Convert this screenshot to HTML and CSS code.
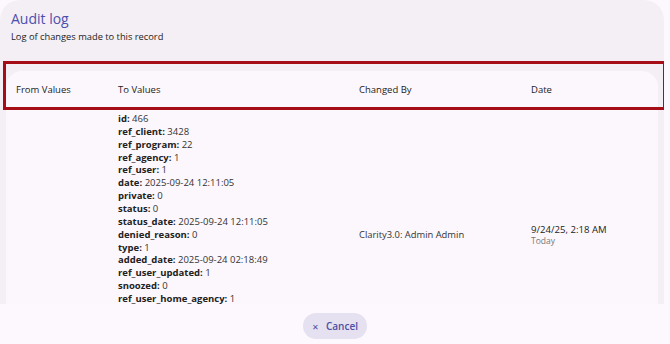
FILE: index.html
```html
<!DOCTYPE html>
<html>
<head>
<meta charset="utf-8">
<link rel="stylesheet" href="styles.css">
</head>
<body>
<div class="page">
  <div class="panel">
    <div class="head">
      <h1 class="title">Audit log</h1>
      <p class="subtitle">Log of changes made to this record</p>
    </div>
    <div class="card">
      <div class="row header-row">
        <div class="cell">From Values</div>
        <div class="cell">To Values</div>
        <div class="cell">Changed By</div>
        <div class="cell">Date</div>
      </div>
      <div class="row body-row">
        <div class="cell"></div>
        <div class="cell values">
          <div><b>id:</b> 466</div>
          <div><b>ref_client:</b> 3428</div>
          <div><b>ref_program:</b> 22</div>
          <div><b>ref_agency:</b> 1</div>
          <div><b>ref_user:</b> 1</div>
          <div><b>date:</b> 2025-09-24 12:11:05</div>
          <div><b>private:</b> 0</div>
          <div><b>status:</b> 0</div>
          <div><b>status_date:</b> 2025-09-24 12:11:05</div>
          <div><b>denied_reason:</b> 0</div>
          <div><b>type:</b> 1</div>
          <div><b>added_date:</b> 2025-09-24 02:18:49</div>
          <div><b>ref_user_updated:</b> 1</div>
          <div><b>snoozed:</b> 0</div>
          <div><b>ref_user_home_agency:</b> 1</div>
        </div>
        <div class="cell mid">Clarity3.0: Admin Admin</div>
        <div class="cell mid">
          <div class="date">9/24/25, 2:18 AM</div>
          <div class="rel">Today</div>
        </div>
      </div>
    </div>
    <div class="highlight"></div>
  </div>
  <div class="footer">
    <button class="cancel"><span class="x">✕</span>Cancel</button>
  </div>
</div>
</body>
</html>
```
FILE: styles.css
```css
* { box-sizing: border-box; }
html, body { margin: 0; padding: 0; }
body {
  background: #fdf8fd;
  font-family: "Open Sans", "Noto Sans", sans-serif;
  color: #222;
  width: 670px;
  height: 344px;
  overflow: hidden;
}
.page { display: flex; flex-direction: column; }
.panel {
  position: relative;
  width: 664px;
  height: 304px;
  flex-shrink: 0;
  background: #f4eff5;
  border-radius: 20px 20px 0 0;
  overflow: hidden;
  display: flex;
  flex-direction: column;
}
.head { padding: 9px 11px 0; height: 71px; flex-shrink: 0; }
.title {
  margin: 0;
  font-size: 14px;
  font-weight: 400;
  color: #4b4fae;
  line-height: 20px;
}
.subtitle {
  margin: 1px 0 0;
  font-size: 9.3px;
  line-height: 13px;
  color: #222;
}
.card {
  margin: 0 6px;
  background: #fcf7fc;
  border-radius: 16px 16px 0 0;
  flex: 1 0 auto;
}
.row {
  display: grid;
  grid-template-columns: 102px 241px 172px 1fr;
}
.cell { padding-left: 10px; }
.header-row {
  height: 36px;
  align-items: center;
  font-size: 9.5px;
  color: #222;
}
.body-row { padding-top: 6px; font-size: 9.5px; }
.values { line-height: 12.86px; color: #333; padding-bottom: 51px; }
.values b { font-weight: 700; color: #222; }
.mid { align-self: center; font-size: 9.4px; color: #333; }
.date { font-size: 9.6px; color: #222; line-height: 13px; }
.rel { font-size: 8.5px; color: #777; line-height: 10px; }
.highlight {
  position: absolute;
  left: 3px;
  top: 61px;
  width: 663px;
  height: 49px;
  border: 3px solid #a50e16;
}
.footer {
  height: 40px;
  padding-top: 4px;
  display: flex;
  justify-content: center;
  align-items: center;
}
.cancel {
  border: none;
  background: #e5e1f1;
  color: #4e4fa5;
  font-family: "Open Sans", "Noto Sans", sans-serif;
  font-weight: 600;
  font-size: 10px;
  height: 26px;
  width: 64px;
  border-radius: 13px;
  display: flex;
  align-items: center;
  justify-content: center;
  gap: 7px;
  padding: 0;
}
.x { font-size: 8px; font-weight: 400; }
```
